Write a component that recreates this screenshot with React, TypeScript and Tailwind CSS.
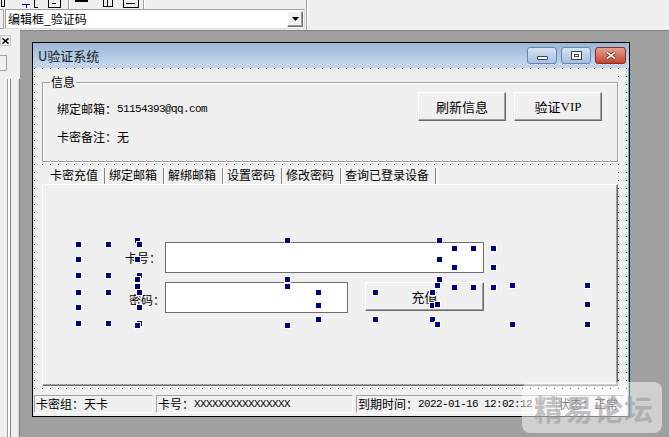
const mono = "font-['Liberation_Mono',monospace] text-[11px] tracking-[-0.6px]";

const raised =
  "bg-[#f0f0f0] border border-t-white border-l-white border-r-[#696969] border-b-[#696969] " +
  "shadow-[inset_-1px_-1px_0_#a0a0a0]";

const sunken =
  "border border-t-[#a0a0a0] border-l-[#a0a0a0] border-r-white border-b-white";

const dots =
  "bg-black bg-[image:linear-gradient(90deg,transparent_1px,#f0f0f0_1px),linear-gradient(transparent_1px,#f0f0f0_1px)] bg-[length:8px_8px]";

// selection handles of the multi-selected controls in the designer
const handles = [
  "left-[75px] top-[241px]", "left-[105px] top-[241px]", "left-[134px] top-[237px]", "left-[136px] top-[241px]",
  "left-[284px] top-[237px]", "left-[436px] top-[237px]", "left-[451px] top-[245px]", "left-[470px] top-[245px]",
  "left-[490px] top-[245px]", "left-[75px] top-[256px]", "left-[134px] top-[256px]", "left-[436px] top-[256px]",
  "left-[451px] top-[264px]", "left-[490px] top-[264px]", "left-[75px] top-[272px]", "left-[105px] top-[272px]",
  "left-[136px] top-[272px]", "left-[134px] top-[276px]", "left-[284px] top-[276px]", "left-[436px] top-[276px]",
  "left-[134px] top-[283px]", "left-[284px] top-[283px]", "left-[434px] top-[282px]", "left-[451px] top-[284px]",
  "left-[470px] top-[284px]", "left-[490px] top-[284px]", "left-[509px] top-[282px]", "left-[584px] top-[282px]",
  "left-[75px] top-[289px]", "left-[105px] top-[289px]", "left-[136px] top-[289px]", "left-[315px] top-[289px]",
  "left-[372px] top-[289px]", "left-[429px] top-[289px]", "left-[75px] top-[304px]", "left-[136px] top-[304px]",
  "left-[315px] top-[302px]", "left-[429px] top-[302px]", "left-[434px] top-[301px]", "left-[584px] top-[301px]",
  "left-[75px] top-[320px]", "left-[105px] top-[320px]", "left-[136px] top-[320px]", "left-[134px] top-[322px]",
  "left-[315px] top-[316px]", "left-[372px] top-[316px]", "left-[429px] top-[316px]", "left-[284px] top-[322px]",
  "left-[434px] top-[321px]", "left-[509px] top-[321px]", "left-[584px] top-[321px]",
];

const tabs = ["卡密充值", "绑定邮箱", "解绑邮箱", "设置密码", "修改密码", "查询已登录设备"];

function TopBar() {
  return (
    <div className="flex h-[30px]">
      <div className="flex w-[306px] flex-col">
        {/* bottom of the toolbar icons, cut off by the screenshot */}
        <svg width="306" height="9" className="block">
          <g stroke="#000" strokeWidth="1" fill="none" shapeRendering="crispEdges">
            <path d="M1 0v6M4 0v7M1 6h4" />
            <path d="M22 4h8M26 4v4" stroke="#000060" />
            <path d="M34 0v7h4" />
            <path d="M48 0v7h12v-7M52 3h4" />
            <path d="M103 0v6h9v-6M107 0v6" />
            <path d="M123 0v7h15v-7M126 3h9" />
          </g>
          <path d="M75 1h13" stroke="#000" strokeWidth="2" shapeRendering="crispEdges" />
          <path d="M68.5 0v9M143.5 0v9" stroke="#a0a0a0" shapeRendering="crispEdges" />
          <path d="M69.5 0v9M144.5 0v9" stroke="#fff" shapeRendering="crispEdges" />
        </svg>
        <div className="flex h-[21px] items-start">
          <div className="h-[20px] w-[4px] border border-l-0 border-[#a0a0a0]" />
          <div className="ml-[1px] flex h-[20px] w-[300px] items-center border border-[#a0a0a0] border-b-[#dcdcdc] border-r-[#dcdcdc] bg-white pl-[2px]">
            <span className="text-[12px] leading-[14px]">编辑框_验证码</span>
            <div className={"ml-auto mr-[1px] flex h-[16px] w-[16px] items-center justify-center " + raised}>
              <svg width="7" height="4" className="block">
                <path d="M0 0h7L3.5 4z" fill="#000" />
              </svg>
            </div>
          </div>
        </div>
      </div>
      <div className="h-full w-[2px] border-l border-r border-l-[#a0a0a0] border-r-white" />
    </div>
  );
}

function LeftPanel() {
  return (
    <div className="flex w-[20px] flex-col bg-[#f0f0f0]">
      <div className="mt-[5px] flex h-[11px] w-[11px] items-center justify-center border border-[#c8c8c8]">
        <svg width="7" height="6" className="block">
          <path d="M0.5 0.5l6 5M6.5 0.5l-6 5" stroke="#000" strokeWidth="1.6" />
        </svg>
      </div>
      <div className="mt-[9px] h-[16px] w-[7px] border border-l-0 border-[#a0a0a0]" />
      <div className="mt-[8px] flex flex-1">
        <div className="w-[7px]" />
        <div className="w-px bg-[#a0a0a0]" />
        <div className="w-[2px] bg-white" />
        <div className="w-px bg-[#808080]" />
        <div className="w-[7px]" />
        <div className="w-px bg-[#dadada]" />
        <div className="w-px bg-[#808080]" />
      </div>
    </div>
  );
}

function TitleBar() {
  return (
    <div className="flex h-[25px] items-center bg-gradient-to-b from-[#9bb7d7] to-[#c7dbef] pl-[5px]">
      <span className="text-[13px] leading-[16px] text-[#1c1c1c]">U验证系统</span>
      <div className="ml-auto flex gap-[4px] pr-[3px]">
        <div className="flex h-[17px] w-[30px] items-center justify-center rounded-[3px] border border-[#6a86ad] bg-gradient-to-b from-[#d6e3f2] to-[#a6c0df]">
          <div className="mt-[4px] h-[4px] w-[11px] rounded-[1px] border border-[#34445a] bg-white" />
        </div>
        <div className="flex h-[17px] w-[30px] items-center justify-center rounded-[3px] border border-[#6a86ad] bg-gradient-to-b from-[#d6e3f2] to-[#a6c0df]">
          <div className="flex h-[9px] w-[11px] items-center justify-center border border-[#34445a] bg-white">
            <div className="h-[3px] w-[5px] border border-[#34445a]" />
          </div>
        </div>
        <div className="flex h-[17px] w-[31px] items-center justify-center rounded-[3px] border border-[#8a2c1f] bg-gradient-to-b from-[#e6a090] to-[#c1432c]">
          <svg width="12" height="9" className="block">
            <path d="M2 1.5l8 6M10 1.5l-8 6" stroke="#5a1a12" strokeWidth="3.2" />
            <path d="M2 1.5l8 6M10 1.5l-8 6" stroke="#fff" strokeWidth="1.6" />
          </svg>
        </div>
      </div>
    </div>
  );
}

function InfoGroup() {
  return (
    <div className="relative flex h-[92px] w-[576px] flex-col bg-[#f0f0f0] pt-[12px]">
      <div className="flex h-[80px] border border-[#a0a0a0] shadow-[inset_1px_1px_0_#fff,1px_1px_0_#fff]">
        <div className="flex flex-col gap-[12px] pl-[14px] pt-[18px]">
          <div className="flex h-[16px] items-center leading-[16px]">
            绑定邮箱：<span className={mono}>51154393@qq.com</span>
          </div>
          <div className="flex h-[16px] items-center leading-[16px]">卡密备注：无</div>
        </div>
        <div className="ml-auto flex gap-[8px] pr-[15px] pt-[9px]">
          <div className={"flex h-[29px] w-[88px] items-center justify-center text-[13px] " + raised}>刷新信息</div>
          <div className={"flex h-[29px] w-[88px] items-center justify-center text-[13px] " + raised}>
            验证<span className="font-['Liberation_Serif',serif] text-[13px]">VIP</span>
          </div>
        </div>
      </div>
      <span className="absolute left-[8px] top-[5px] bg-[#f0f0f0] px-[1px] text-[12px] leading-[14px]">信息</span>
    </div>
  );
}

function TabControl() {
  return (
    <div className="mt-[3px] flex h-[221px] w-[576px] flex-col bg-[#f0f0f0]">
      <div className="flex h-[19px] pl-[3px]">
        {tabs.map((t, i) => (
          <div key={t} className="flex h-full">
            <div className={"flex h-full items-center pr-[6px] text-[12px] " + (i === 0 ? "pl-[5px]" : "pl-[3px]")}>
              {t}
            </div>
            <div className="h-[16px] w-[2px] self-end border-r border-white bg-[#808080]" />
          </div>
        ))}
      </div>
      <div className="h-[202px] border border-t-white border-l-white border-r-[#696969] border-b-[#696969] shadow-[inset_-1px_-1px_0_#a0a0a0] pl-[82px] pt-[57px]">
        <div className="flex items-center">
          <span className="w-[36px] text-[12px] leading-[16px]">卡号：</span>
          <div className="ml-[4px] h-[31px] w-[319px] border border-[#6e6e6e] bg-white" />
        </div>
        <div className="mt-[9px] flex items-start">
          <span className="ml-[4px] mt-[10px] w-[36px] text-[12px] leading-[16px]">密码：</span>
          <div className="h-[31px] w-[183px] border border-[#6e6e6e] bg-white" />
          <div className={"ml-[17px] flex h-[29px] w-[119px] items-center justify-center text-[13px] " + raised}>充值</div>
        </div>
      </div>
    </div>
  );
}

function StatusBar() {
  return (
    <div className="flex h-[18px] gap-[3px] text-[12px] leading-[16px]">
      <div className={"flex w-[119px] items-center pl-[1px] " + sunken}>卡密组：天卡</div>
      <div className={"flex w-[197px] items-center pl-[1px] " + sunken}>
        卡号：<span className={mono}>XXXXXXXXXXXXXXXX</span>
      </div>
      <div className={"flex w-[197px] items-center pl-[1px] " + sunken}>
        到期时间：<span className={mono}>2022-01-16 12:02:12</span>
      </div>
      <div className={"flex w-[69px] items-center pl-[1px] " + sunken}>状态：正常</div>
    </div>
  );
}

function FormWindow() {
  return (
    <div className="flex h-[375px] w-[598px] flex-col border border-black">
      <TitleBar />
      <div className="flex flex-1">
        <div className="w-px bg-[#dce7f3]" />
        <div className="flex flex-1 flex-col bg-[#f0f0f0]">
          <div className={"flex h-[327px] flex-col pl-[8px] pt-[2px] " + dots}>
            <InfoGroup />
            <TabControl />
          </div>
          <StatusBar />
          <div className="h-[3px]" />
        </div>
        <div className="w-px bg-[#3cc0f0]" />
      </div>
    </div>
  );
}

export default function App() {
  return (
    <div className="relative h-[437px] w-[669px] overflow-hidden bg-[#f0f0f0] font-['Noto_Sans_CJK_SC',sans-serif] text-[12px] text-black">
      <TopBar />
      <div className="flex h-[407px]">
        <LeftPanel />
        <div className="flex-1 border-t border-[#808080] bg-[#a0a0a0] pl-[12px] pt-[11px]">
          <FormWindow />
        </div>
      </div>
      {handles.map((h) => (
        <div key={h} className={"absolute h-[7px] w-[7px] border border-white bg-[#000080] " + h} />
      ))}
      <div className="absolute left-[522px] top-[382px] flex h-[51px] w-[140px] items-center rounded-[8px] bg-white/50 pl-[12px]">
        <span className="text-[29px] font-bold leading-[34px] tracking-[1px] text-[#9a9a9a]/60">精易论坛</span>
      </div>
    </div>
  );
}
